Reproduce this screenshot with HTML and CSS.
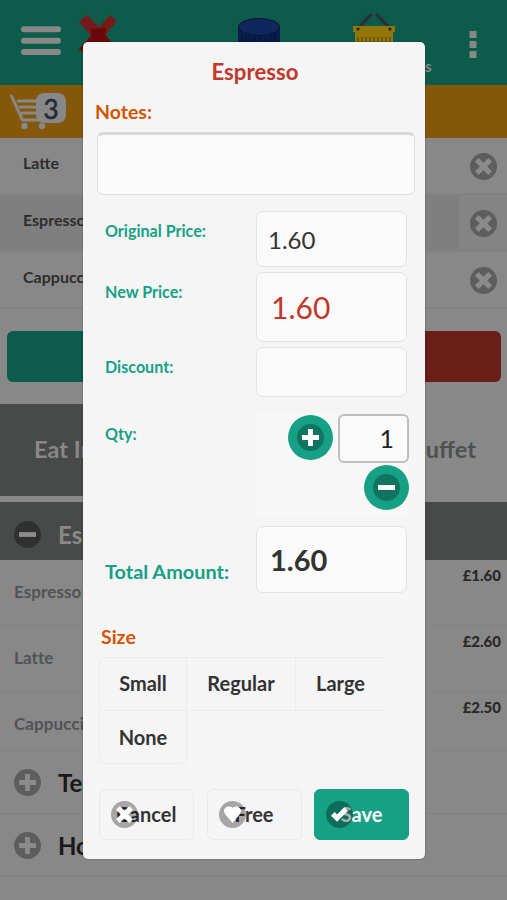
FILE: index.html
```html
<!DOCTYPE html>
<html lang="en">
<head>
<meta charset="utf-8">
<title>Till</title>
<link rel="stylesheet" href="styles.css">
</head>
<body>
<svg class="defs" width="0" height="0">
  <symbol id="cross" viewBox="0 0 14 14"><path d="M14 3 11 0 7 4 3 0 0 3l4 4-4 4 3 3 4-4 4 4 3-3-4-4z"/></symbol>
  <symbol id="plus" viewBox="0 0 14 14"><path d="M14 5H9V0H5v5H0v4h5v5h4V9h5z"/></symbol>
  <symbol id="minus" viewBox="0 0 14 14"><path d="M0 5h14v4H0z"/></symbol>
  <symbol id="heart" viewBox="0 0 14 14"><path d="M7 1.9C7-.4 13.8-.6 14 4c.1 3-4 6-7 10-3-4-7.100-7-7-10C.2-.6 7-.4 7 1.900z"/></symbol>
  <symbol id="check" viewBox="0 0 14 14"><path d="M14 4 11 1 5 7 3 5 0 8l5 5z"/></symbol>
</svg>
<div class="page">
  <header class="topbar">
    <svg class="burger" width="40" height="30" viewBox="0 0 40 30"><path d="M3 3.200h34M3 14.800h34M3 26h34" stroke="#888" stroke-width="6" stroke-linecap="round"/></svg>
    <svg class="redx" width="38" height="40" viewBox="0 0 38 40"><path d="M0 7 8 0l12 12L31 0l7 6-12 14 12 13-7 7-12-13L7 40 0 34l12-14z" fill="#761b19"/><path d="m12 14 15-1-1 6 11 14-7 7-12-13L7 40l-7-6 12-13z" fill="#6c080b"/></svg>
    <svg class="drum" width="42" height="40" viewBox="0 0 42 40"><path d="M0 9v26h42V9z" fill="#091c4b"/><ellipse cx="21" cy="9" rx="20.500" ry="8.500" fill="#10275d" stroke="#081433"/><path d="M4 16v20M8 18v20M12 19v20M17 19v20M22 19v20M27 19v20M32 18v20M37 16v20" stroke="#06112f" stroke-width="1"/></svg>
    <div class="basket">
      <svg width="44" height="44" viewBox="0 0 44 44"><path d="M8 13 20 1M36 13 24 1" stroke="#28303a" stroke-width="3.500"/><path d="M1 13h42v6h-2v24H3V19H1z" fill="#927609"/><path d="M6 24v12M10 24v12M14 24v12M18 24v12M22 24v12M26 24v12M30 24v12M34 24v12M38 24v12" stroke="#615009" stroke-width="1.500"/><circle cx="6" cy="16" r="1.600" fill="#242613"/><circle cx="38" cy="16" r="1.600" fill="#242613"/></svg>
      <span class="caption">Baskets</span>
    </div>
    <svg class="kebab" width="8" height="27" viewBox="0 0 8 27"><path d="M.5 0h7v7h-7zM.5 10h7v7h-7zM.5 20h7v7h-7z" fill="#888"/></svg>
  </header>
  <div class="cartbar">
    <svg width="40" height="36" viewBox="0 0 40 36"><path d="m1.500 2 11 24h25M8 7h28M10 13h26M12 19h24" fill="none" stroke="#888" stroke-width="3" stroke-linecap="round"/><circle cx="14.500" cy="32" r="3.200" fill="#888"/><circle cx="32" cy="32" r="3.200" fill="#888"/></svg>
    <span class="count">3</span>
  </div>
  <div class="line"><span>Latte</span><i class="disc"><svg><use href="#cross"/></svg></i></div>
  <div class="line picked"><span>Espresso</span><i class="disc"><svg><use href="#cross"/></svg></i></div>
  <div class="line"><span>Cappuccino</span><i class="disc"><svg><use href="#cross"/></svg></i></div>
  <div class="actions"><div class="pay"></div><div class="clear"></div></div>
  <div class="tabs"><div class="tab on">Eat In</div><div class="tab">Buffet</div></div>
  <div class="group open"><i class="disc"><svg><use href="#minus"/></svg></i>Espresso</div>
  <div class="item"><span>Espresso</span><b>£1.60</b></div>
  <div class="item"><span>Latte</span><b>£2.60</b></div>
  <div class="item last"><span>Cappuccino</span><b>£2.50</b></div>
  <div class="group"><i class="disc"><svg><use href="#plus"/></svg></i>Tea</div>
  <div class="group"><i class="disc"><svg><use href="#plus"/></svg></i>Hot</div>
</div>

<div class="dialog">
  <h1>Espresso</h1>
  <h2>Notes:</h2>
  <div class="notes"></div>
  <div class="fields">
    <label class="l1">Original Price:</label><div class="box original">1.60</div>
    <label class="l2">New Price:</label><div class="box new">1.60</div>
    <label class="l3">Discount:</label><div class="box discount"></div>
    <label class="l4">Qty:</label>
    <div class="qty">
      <div class="round"><i class="disc"><svg><use href="#plus"/></svg></i></div>
      <div class="number">1</div>
      <div class="round"><i class="disc"><svg><use href="#minus"/></svg></i></div>
    </div>
    <label class="l5">Total Amount:</label><div class="box total">1.60</div>
  </div>
  <h2 class="size">Size</h2>
  <div class="options">
    <div class="opt small">Small</div><div class="opt regular">Regular</div><div class="opt large">Large</div>
    <div class="opt none">None</div>
  </div>
  <div class="buttons">
    <div class="btn">Cancel<i class="disc"><svg><use href="#cross"/></svg></i></div>
    <div class="btn">Free<i class="disc"><svg><use href="#heart"/></svg></i></div>
    <div class="btn save">Save<i class="disc"><svg><use href="#check"/></svg></i></div>
  </div>
</div>
</body>
</html>
```
FILE: styles.css
```css
* { box-sizing: border-box; }
body { margin: 0; width: 507px; height: 900px; overflow: hidden; position: relative; background: #888; font-family: Lato, sans-serif; font-weight: 700; color: #2d2d2d; }
.defs { display: none; }
svg { display: block; flex: none; }
.page { height: 900px; overflow: hidden; }

.topbar { height: 85px; background: #0c5b4b; display: flex; align-items: flex-start; }
.burger { margin: 26px 0 0 21px; }
.redx { margin: 15px 0 0 18px; }
.drum { margin: 18px 0 0 121px; }
.basket { width: 110px; margin: 13px 0 0 39px; display: flex; flex-direction: column; align-items: center; }
.basket .caption { width: 115px; margin-top: 0; text-align: right; font-size: 15px; line-height: 18px; color: #888; }
.kebab { margin: 31px 0 0 40px; }

.cartbar { height: 53px; background: #85570a; display: flex; padding: 8px 0 0 10px; align-items: flex-start; }
.cartbar svg { margin-top: 1px; }
.count { width: 30px; height: 30px; margin-left: -14px; border-radius: 8px; background: #888; color: #242c3b; font-size: 26px; line-height: 32px; text-align: center; font-weight: 400; -webkit-text-stroke: .6px #242c3b; }

.disc { display: flex; align-items: center; justify-content: center; width: 27px; height: 27px; border-radius: 50%; background: #5d5d5d; flex: none; }
.disc svg { width: 17px; height: 17px; fill: #8b8b8b; }

.line { height: 57px; display: flex; justify-content: space-between; padding: 15px 10px 0 23px; font-size: 16px; line-height: 20px; background: #888; border-bottom: 2px solid #828282; }
.line.picked { background: linear-gradient(90deg, #7f7f7f 459px, #848484 459px); }

.actions { display: flex; padding: 22px 6px 22px 7px; }
.actions div { flex: 1; height: 51px; }
.pay { background: #0c5b4b; border-radius: 6px; }
.clear { background: #6a1e18; border-radius: 6px; }
.tabs { display: flex; height: 98px; border-bottom: 6px solid #888; }
.tab { flex: 1; padding-right: 31px; text-align: right; font-size: 23.500px; line-height: 91px; color: #4e5151; }
.tab.on { background: #484a49; color: #888; text-align: left; padding-left: 34px; }
.group { display: flex; align-items: center; gap: 17px; height: 63px; padding: 1px 0 0 14px; font-size: 24px; color: #191919; border-bottom: 1px solid #808080; }
.group.open { height: 58px; padding-top: 6px; background: #484a49; color: #888; border: 0; }
.group.open .disc { background: #2f3030; }
.item { height: 66px; padding: 7px 6px 0 14px; display: flex; justify-content: space-between; border-bottom: 1px solid #838383; font-size: 17px; color: #515454; }
.item span { line-height: 20px; margin-top: 15px; letter-spacing: .1px; }
.item b { font-size: 15px; line-height: 17px; color: #292929; }
.item.last { height: 59px; }

.dialog { position: absolute; left: 83px; top: 42px; width: 342px; height: 817px; background: #f5f5f5; border-radius: 5px; padding: 0 10px 0 12px; box-shadow: 0 0 2px rgba(0,0,0,.4); display: flex; flex-direction: column; }
h1 { margin: 17px 0 0; font-size: 22.200px; line-height: 26px; color: #c0392b; text-align: center; }
h2 { margin: 15px 0 0; font-size: 19.500px; line-height: 24px; color: #d35400; }
.notes { margin: 8px 0 0 2px; width: 318px; height: 63px; border: 1.500px solid #e0e0e0; border-top: 3px solid #d8d8d8; border-radius: 6px; background: #fafafa; }
.fields { margin: 16px 0 0 10px; display: grid; grid-template-columns: 151px 153px; grid-template-rows: 61px 75px 66px 113px 67px; color: #16a085; font-size: 16.100px; line-height: 20px; }
.fields label { padding-top: 10px; }
.fields .l4 { padding-top: 11px; }
.fields .l5 { padding-top: 33px; font-size: 19.900px; line-height: 24px; }
.box { width: 151px; border: 1px solid #e2e2e2; border-radius: 7px; background: #fafafa; color: #333; font-weight: 400; }
.original { height: 56px; padding-left: 11px; font-size: 24px; line-height: 56px; }
.new { height: 70px; padding-left: 14px; font-size: 30px; line-height: 69px; color: #c0392b; }
.discount { height: 50px; }
.total { height: 67px; padding-left: 13px; font-size: 29px; line-height: 65px; font-weight: 700; }
.qty { width: 153px; height: 104px; display: flex; flex-wrap: wrap; justify-content: flex-end; align-content: flex-start; gap: 2px 5px; background: #f7f7f7; }
.round { width: 45px; height: 45px; border-radius: 50%; background: #16a085; display: flex; align-items: center; justify-content: center; }
.round .disc { background: #117460; }
.round svg, .btn svg { fill: #fff; }
.round:first-child { margin-top: 2px; }
.number { width: 71px; height: 49px; margin-top: 1px; border: 2px solid #bbbfbe; border-radius: 6px; background: #fafafa; color: #222; font-size: 25px; line-height: 45px; padding-right: 13px; text-align: right; font-weight: 400; }
h2.size { margin: 32px 0 0 6px; }
.options { margin: 8px 0 0 4px; display: grid; grid-template-columns: 88px 109px 89px; grid-template-rows: 54px 53px; font-size: 20px; line-height: 51px; color: #333; text-align: center; }
.opt { border: 1.500px solid #ececec; border-left-width: 0; }
.small { border-left-width: 1px; border-radius: 6px 0 0; }
.large { border-right: 0; }
.none { border-left-width: 1px; border-top: 0; border-radius: 0 0 6px 6px; line-height: 53px; }
.buttons { margin: 25px 0 0 4px; display: flex; gap: 12.500px; }
.btn { position: relative; width: 95px; height: 51px; border: 1px solid #eaeaea; border-radius: 6px; font-size: 20px; line-height: 49px; text-align: center; color: #333; }
.btn .disc { position: absolute; left: 11px; top: 11px; background: rgba(0,0,0,.32); }
.save { background: #16a085; border-color: #16a085; color: #fff; }
```
